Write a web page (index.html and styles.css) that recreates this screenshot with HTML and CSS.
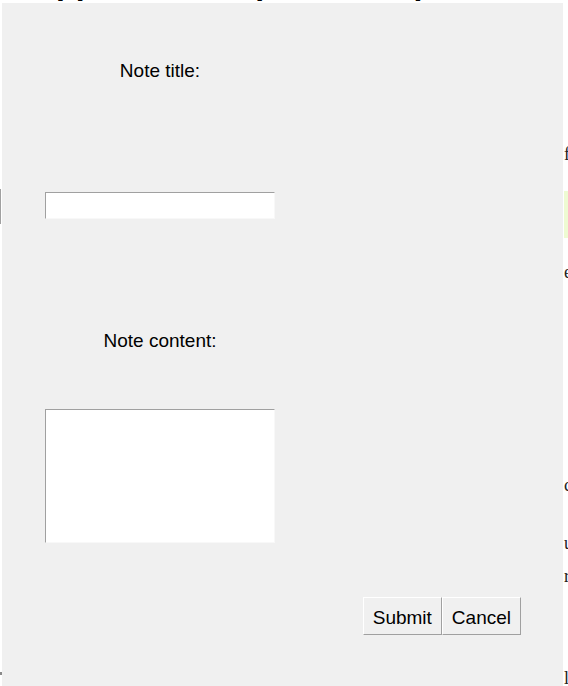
FILE: index.html
```html
<!DOCTYPE html>
<html lang="en">
<head>
<meta charset="utf-8">
<title>Notes</title>
<link rel="stylesheet" href="styles.css">
</head>
<body>
  <div class="page">
    <h1 class="page-title">App Notes keep, and simple</h1>
    <div class="page-body">
      <div class="left-col">
        <div class="bg-field"></div>
        <div class="bg-mark"></div>
      </div>
      <div class="right-col">
        <p class="bg-line l1">from</p>
        <div class="bg-highlight"></div>
        <p class="bg-line l2">each</p>
        <p class="bg-line l3">code</p>
        <p class="bg-line l4">update</p>
        <p class="bg-line l5">read</p>
        <p class="bg-line l6">line</p>
      </div>
    </div>
  </div>

  <div class="dialog">
    <p class="field-label">Note title:</p>
    <input class="title-input" type="text">
    <p class="field-label label-content">Note content:</p>
    <textarea class="content-input"></textarea>
    <div class="actions">
      <button class="btn" type="button">Submit</button>
      <button class="btn" type="button">Cancel</button>
    </div>
  </div>
</body>
</html>
```

FILE: styles.css
```css
html, body {
  margin: 0;
  padding: 0;
  background: #ffffff;
}

body {
  position: relative;
  min-height: 686px;
  overflow: hidden;
  font-family: "Liberation Serif", "Times New Roman", serif;
  color: #222;
}

.page-title {
  margin: -33px 0 0 8px;
  font: bold 32px/32px "Liberation Sans", Arial, sans-serif;
  text-indent: 25px;
  white-space: nowrap;
  color: #000;
}

.page-body {
  display: grid;
  grid-template-columns: 563px 1fr;
  margin-top: 3px;
}

.bg-field {
  margin-top: 187px;
  width: 100px;
  height: 35px;
  border-left: 1px solid #a0a0a0;
}

.bg-mark {
  margin-top: 448px;
  width: 2px;
  height: 3px;
  background: #8a8a8a;
}

.right-col {
  padding-left: 1px;
}

.bg-line {
  margin: 0;
  font-size: 18px;
  line-height: 20px;
  white-space: nowrap;
  color: #222;
}

.l1 { margin-top: 142px; }
.bg-highlight {
  margin-top: 27px;
  height: 47px;
  background: #eefbd2;
}
.l2 { margin-top: 24px; }
.l3 { margin-top: 193px; }
.l4 { margin-top: 38px; }
.l5 { margin-top: 13px; }
.l6 { margin-top: 82px; }

.dialog {
  position: absolute;
  left: 2px;
  top: 3px;
  width: 561px;
  height: 700px;
  box-sizing: border-box;
  padding: 57px 42px 0 43px;
  background: #f0f0f0;
  display: flex;
  flex-direction: column;
  align-items: flex-start;
  font-family: "Liberation Sans", Arial, sans-serif;
  color: #000;
}

.field-label {
  margin: 0;
  width: 230px;
  text-align: center;
  font-size: 19px;
  line-height: 22px;
}

.title-input,
.content-input {
  display: block;
  box-sizing: border-box;
  width: 230px;
  margin: 0;
  padding: 0;
  background: #ffffff;
  border-style: solid;
  border-width: 1px;
  border-color: #a0a0a0 #f8f8f8 #f8f8f8 #a0a0a0;
  outline: none;
  font: 16px "Liberation Sans", Arial, sans-serif;
}

.title-input {
  margin-top: 110px;
  height: 27px;
}

.label-content {
  margin-top: 111px;
}

.content-input {
  margin-top: 57px;
  height: 134px;
  resize: none;
}

.actions {
  margin-top: 54px;
  align-self: flex-end;
  display: flex;
}

.btn {
  margin: 0;
  padding: 9px 9px 5px;
  font: 19px/22px "Liberation Sans", Arial, sans-serif;
  color: #000;
  background: #f0f0f0;
  border: 1px solid;
  border-color: #ffffff #a0a0a0 #a0a0a0 #ffffff;
  border-radius: 0;
}
```
